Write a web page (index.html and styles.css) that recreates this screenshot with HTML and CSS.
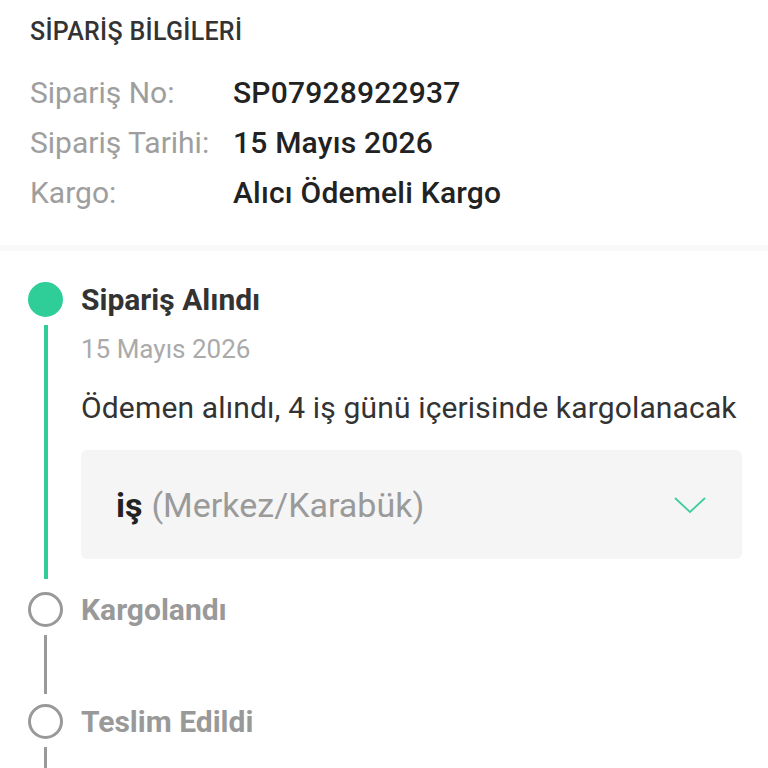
FILE: index.html
```html
<!DOCTYPE html>
<html>
<head>
  <title>Sipariş Bilgileri</title>
  <link rel="stylesheet" href="styles.css">
</head>
<body>
  <div class="order-info">
    <h2 class="section-title">SİPARİŞ BİLGİLERİ</h2>
    <div class="info-row">
      <span class="info-label">Sipariş No:</span>
      <span class="info-value">SP07928922937</span>
    </div>
    <div class="info-row">
      <span class="info-label">Sipariş Tarihi:</span>
      <span class="info-value">15 Mayıs 2026</span>
    </div>
    <div class="info-row">
      <span class="info-label">Kargo:</span>
      <span class="info-value">Alıcı Ödemeli Kargo</span>
    </div>
  </div>

  <div class="divider"></div>

  <!-- order status timeline -->
  <div class="timeline">
    <div class="step done first">
      <div class="marker">
        <span class="dot"></span>
        <span class="line"></span>
      </div>
      <div class="step-body">
        <div class="step-title">Sipariş Alındı</div>
        <div class="step-date">15 Mayıs 2026</div>
        <div class="step-desc">Ödemen alındı, 4 iş günü içerisinde kargolanacak</div>
        <div class="cargo-box">
          <span class="cargo-name">iş</span>
          <span class="cargo-place">(Merkez/Karabük)</span>
          <svg class="chevron" width="34" height="18" viewBox="0 0 34 18">
            <polyline points="2,2 17,16 32,2" fill="none" stroke="#3fcca0" stroke-width="1.8"/>
          </svg>
        </div>
      </div>
    </div>

    <div class="step">
      <div class="marker">
        <span class="dot"></span>
        <span class="line"></span>
      </div>
      <div class="step-body">
        <div class="step-title">Kargolandı</div>
      </div>
    </div>

    <div class="step last">
      <div class="marker">
        <span class="dot"></span>
        <span class="line"></span>
      </div>
      <div class="step-body">
        <div class="step-title">Teslim Edildi</div>
      </div>
    </div>
  </div>
</body>
</html>
```

FILE: styles.css
```css
/* order detail page */
body {
  font-family: Roboto, 'Liberation Sans', Arial, sans-serif;
  margin: 0;
  padding: 0;
  background-color: #fff;
  color: #222;
  height: 768px;
  overflow: hidden;
}

.order-info {
  padding: 17px 30px 27px;
}

.section-title {
  margin: 0 0 21px;
  font-size: 25px;
  line-height: 30px;
  font-weight: 500;
  letter-spacing: 0.3px;
  color: #333;
}

.info-row {
  display: flex;
  font-size: 30px;
  line-height: 50px;
}

.info-label {
  width: 203px;
  color: #9e9e9e;
}

.info-value {
  color: #222;
  font-weight: 500;
  letter-spacing: 0.2px;
}

.divider {
  height: 6px;
  background-color: #f9f9f9;
}

.timeline {
  padding: 31px 26px 0 28px;
}

.step {
  display: grid;
  grid-template-columns: 35px 1fr;
  column-gap: 18px;
  min-height: 112px;
}

.step.first .step-body {
  padding-bottom: 33px;
}

.step.last {
  min-height: 64px;
}

.marker {
  display: flex;
  flex-direction: column;
  align-items: center;
}

.dot {
  width: 35px;
  height: 35px;
  border-radius: 50%;
  box-sizing: border-box;
  border: 3px solid #999;
  flex-shrink: 0;
}

.line {
  flex: 1;
  width: 3px;
  margin: 8px 0 10px;
  background-color: #999;
}

.step.last .line {
  margin-bottom: 0;
}

.step.done .dot {
  background-color: #2fce98;
  border-color: #2fce98;
}

.step.done .line {
  width: 4px;
  background-color: #2fce98;
  margin-bottom: 13px;
}

.step-title {
  font-size: 30px;
  line-height: 36px;
  font-weight: 700;
  color: #999;
}

.step.done .step-title {
  color: #333;
}

.step-date {
  margin-top: 15px;
  font-size: 26px;
  line-height: 32px;
  color: #aaa;
}

.step-desc {
  margin-top: 24px;
  font-size: 30px;
  line-height: 38px;
  letter-spacing: 0.15px;
  color: #333;
}

.cargo-box {
  display: flex;
  align-items: center;
  margin-top: 23px;
  height: 109px;
  padding: 0 35px;
  background-color: #f5f5f5;
  border-radius: 6px;
  font-size: 34px;
}

.cargo-name {
  font-weight: 700;
  color: #222;
  margin-right: 9px;
}

.cargo-place {
  color: #9a9a9a;
  flex: 1;
}
```
